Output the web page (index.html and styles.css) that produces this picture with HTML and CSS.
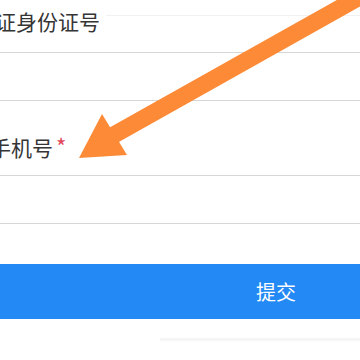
FILE: index.html
```html
<!DOCTYPE html>
<html lang="zh-CN">

<head>
    <meta charset="UTF-8">
    <meta name="viewport" content="width=device-width, initial-scale=1.0">
    <title>提交信息</title>
    <link rel="stylesheet" href="styles.css">
</head>

<body>
    <div class="form">
        <div class="label-row first">
            <span class="label-text">证身份证号</span>
            <span class="hint-line"></span>
        </div>
        <div class="input-row"></div>

        <div class="label-row second">
            <span class="label-text">手机号<span class="required">*</span></span>
        </div>
        <div class="input-row"></div>

        <button class="submit-btn">提交</button>
        <div class="bottom-shade"></div>
    </div>

    <!-- annotation arrow drawn over the form -->
    <svg class="arrow" width="360" height="360" viewBox="0 0 360 360">
        <line x1="112" y1="136" x2="372" y2="-10" stroke="#fd8a36" stroke-width="17" />
        <polygon points="102,114 79,158 127,155" fill="#fd8a36" />
    </svg>
</body>

</html>
```

FILE: styles.css
```css
* {
    margin: 0;
    padding: 0;
    box-sizing: content-box;
}

body {
    font-family: "Noto Sans CJK SC", "Noto Sans", sans-serif;
    background: #ffffff;
    color: #353535;
    width: 360px;
    height: 360px;
    overflow: hidden;
    position: relative;
}

.form {
    display: flex;
    flex-direction: column;
}

.label-row {
    display: flex;
    border-bottom: 1px solid #d6d6d6;
}

.label-text {
    font-size: 21px;
    line-height: 21px;
    white-space: nowrap;
}

.required {
    color: #e0455a;
    font-size: 22px;
    margin-left: 3px;
    vertical-align: top;
    line-height: 16px;
}

.label-row.first {
    height: 52px;
}

.label-row.first .label-text {
    margin-top: 11px;
    margin-left: -5px;
}

.hint-line {
    flex: 1;
    margin-top: 15px;
    margin-left: 6px;
    height: 0;
    border-top: 1px solid #f1f1f1;
}

.label-row.second {
    height: 38px;
    padding-top: 36px;
}

.label-row.second .label-text {
    margin-left: -10px;
}

.input-row {
    height: 47px;
    border-bottom: 1px solid #d6d6d6;
}

.submit-btn {
    margin-top: 40px;
    height: 55px;
    border: none;
    background: #2289f5;
    color: #ffffff;
    font-family: inherit;
    font-size: 20px;
    padding-left: 192px;
    text-align: center;
}

.bottom-shade {
    margin-top: 18px;
    margin-left: 160px;
    height: 5px;
    background: linear-gradient(#ffffff, #f3f3f3, #ffffff);
}

.arrow {
    position: absolute;
    top: 0;
    left: 0;
}
```
